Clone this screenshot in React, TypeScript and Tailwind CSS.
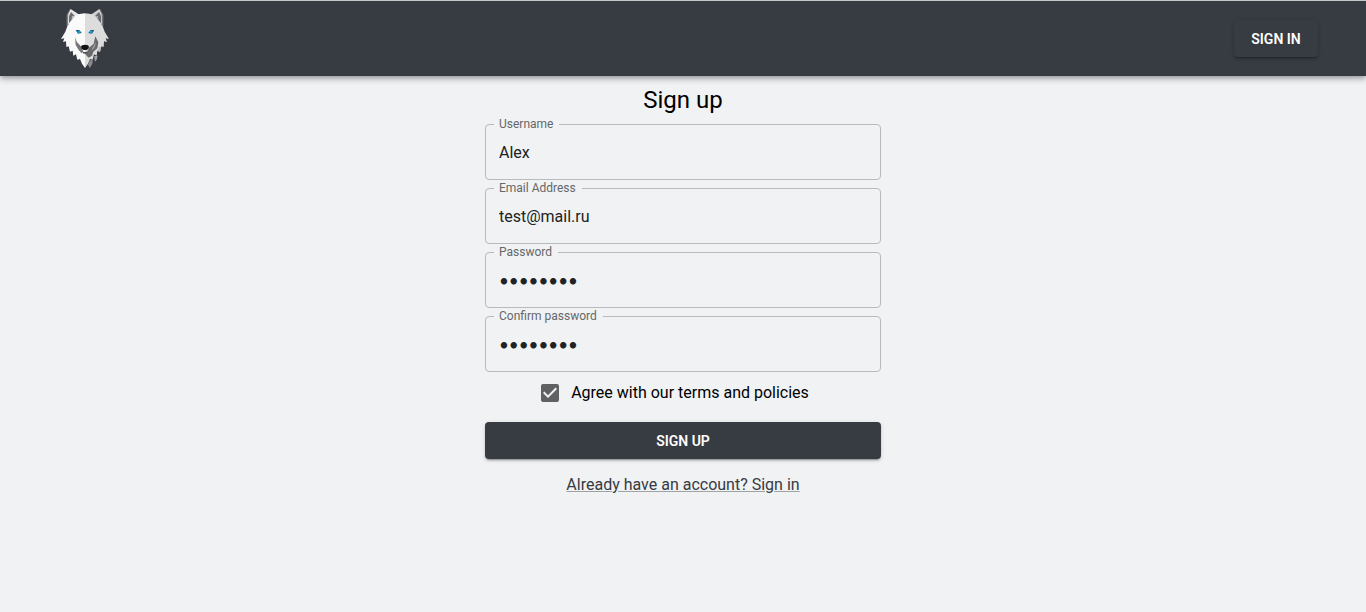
import { useState } from "react";

function WolfLogo() {
  return (
    <svg viewBox="-6 24 222 180" className="h-15 w-[74px]" role="img" aria-label="Wolf">
      <path d="M60 24 L50 42 L50 74 L56 80 L72 50 L88 41 Z" fill="#7d7f83" />
      <path d="M62 24 L74 32 L88 41 L72 52 L60 74 L54 66 L55 40 Z" fill="#e9e9ea" />
      <path d="M63 33 L74 44 L66 56 L57 66 L57 46 Z" fill="#6c6c70" />
      <path d="M66 44 L76 46 L64 62 Z" fill="#b9b9bc" />
      <path d="M150 24 L160 42 L160 74 L154 80 L138 50 L122 41 Z" fill="#77797d" />
      <path d="M148 24 L136 32 L122 41 L138 52 L150 74 L156 66 L155 40 Z" fill="#cfcfd1" />
      <path d="M147 33 L136 44 L144 56 L153 66 L153 46 Z" fill="#68686c" />
      <path d="M144 44 L134 46 L146 62 Z" fill="#a8a8ab" />
      <path
        d="M105 37 L88 39 L74 46 L62 62 L52 76 L46 92 L33 114 L43 112 L39 123 L48 121 L49 138 L56 136 L60 152 L68 149 L70 164 L78 160 L82 176 L90 174 L96 188 L105 201 Z"
        fill="#fafafa"
      />
      <path
        d="M105 37 L122 39 L136 46 L148 62 L158 76 L164 92 L177 114 L167 112 L171 123 L162 121 L161 138 L154 136 L150 152 L142 149 L140 164 L132 160 L128 176 L120 174 L114 188 L105 201 Z"
        fill="#dcdcdd"
      />
      <path d="M75 108 L80 122 L94 137 L99 150 L95 157 L86 147 L77 132 Z" fill="#77777a" />
      <path d="M136 106 L145 124 L142 142 L130 152 L126 164 L116 170 L106 160 L112 152 L117 140 L131 128 Z" fill="#69696d" />
      <path d="M138 122 L135 138 L124 150 L128 138 Z" fill="#9a9a9d" />
      <path d="M128 176 L127 188 L119 202 L114 190 L120 178 Z" fill="#8b8b8e" />
      <path d="M143 164 L140 176 L135 182 L132 166 Z" fill="#a0a0a3" />
      <path d="M154 138 L150 153 L143 150 L148 138 Z" fill="#b9b9bb" />
      <path d="M93 138 Q94 131 105 131 Q116 131 117 138 Q116 145 109 147 L101 147 Q94 145 93 138 Z" fill="#111214" />
      <path d="M95 151 L105 154 L115 151 L109 158 L101 158 Z" fill="#4c4c50" />
      <path d="M77 87 L88 87 L95 96 L84 98 Z" fill="#1d5a78" />
      <circle cx="87" cy="93" r="4" fill="#14a3dc" />
      <path d="M133 87 L122 87 L115 96 L126 98 Z" fill="#1d5a78" />
      <circle cx="123" cy="93" r="4" fill="#14a3dc" />
    </svg>
  );
}

type FieldProps = { id: string; label: string; type: string; initial: string };

function Field({ id, label, type, initial }: FieldProps) {
  const [value, setValue] = useState(initial);
  const face = type === "password" ? "font-['Lato',sans-serif] text-[17px]" : "text-base";
  return (
    <div className="relative">
      <label
        htmlFor={id}
        className="absolute -top-2 left-[9px] bg-[#f0f2f4] pr-1.5 pl-[5px] text-xs leading-4 text-[#666768]"
      >
        {label}
      </label>
      <input
        id={id}
        type={type}
        value={value}
        onChange={(e) => setValue(e.target.value)}
        className={`${face} block h-14 w-full rounded border border-[#b8babc] bg-transparent px-[13px] text-[#212223] outline-none focus:border-[#373b42]`}
      />
    </div>
  );
}

const fields: FieldProps[] = [
  { id: "username", label: "Username", type: "text", initial: "Alex" },
  { id: "email", label: "Email Address", type: "email", initial: "test@mail.ru" },
  { id: "password", label: "Password", type: "password", initial: "password" },
  { id: "confirm", label: "Confirm password", type: "password", initial: "password" },
];

const raised =
  "rounded bg-[#373b42] text-sm font-semibold text-white uppercase shadow-[0_3px_1px_-2px_rgba(0,0,0,0.2),0_2px_2px_0_rgba(0,0,0,0.14),0_1px_5px_0_rgba(0,0,0,0.12)]";

export default function App() {
  const [agree, setAgree] = useState(true);
  return (
    <div className="min-h-screen bg-[#f0f2f4] font-['Roboto',sans-serif] text-black">
      <header className="flex h-19 items-center justify-between border-t border-[#c3c8c9] bg-[#373b42] px-12 shadow-[0_2px_4px_-1px_rgba(0,0,0,0.2),0_4px_5px_0_rgba(0,0,0,0.14),0_1px_10px_0_rgba(0,0,0,0.12)]">
        <a href="#home">
          <WolfLogo />
        </a>
        <button type="button" className={`${raised} h-[37px] min-w-[84px] px-4`}>
          Sign in
        </button>
      </header>
      <main className="mx-auto max-w-[444px] px-6 pt-2">
        <form className="flex flex-col gap-2" onSubmit={(e) => e.preventDefault()}>
          <h1 className="text-center text-2xl leading-8">Sign up</h1>
          {fields.map((f) => (
            <Field key={f.id} {...f} />
          ))}
          <label className="-mt-2 flex h-[42px] items-center justify-center gap-3 pr-4 text-base">
            <span className="grid">
              <input
                type="checkbox"
                checked={agree}
                onChange={(e) => setAgree(e.target.checked)}
                className="peer col-start-1 row-start-1 size-[18px] appearance-none rounded-xs border-2 border-[#606163] checked:bg-[#606163]"
              />
              <svg
                viewBox="0 0 18 18"
                className="pointer-events-none invisible col-start-1 row-start-1 size-[18px] peer-checked:visible"
                aria-hidden="true"
              >
                <path d="M7 14 L2 9 l1.41-1.41 L7 11.17 l7.59-7.59 L16 5 Z" fill="#f0f2f4" />
              </svg>
            </span>
            Agree with our terms and policies
          </label>
          <button type="submit" className={`${raised} h-[37px] w-full`}>
            Sign up
          </button>
        </form>
        <p className="mt-3.5 text-center text-base">
          <a href="#signin" className="text-[#373b42] underline decoration-[#a0a3a6]">
            Already have an account? Sign in
          </a>
        </p>
      </main>
    </div>
  );
}
